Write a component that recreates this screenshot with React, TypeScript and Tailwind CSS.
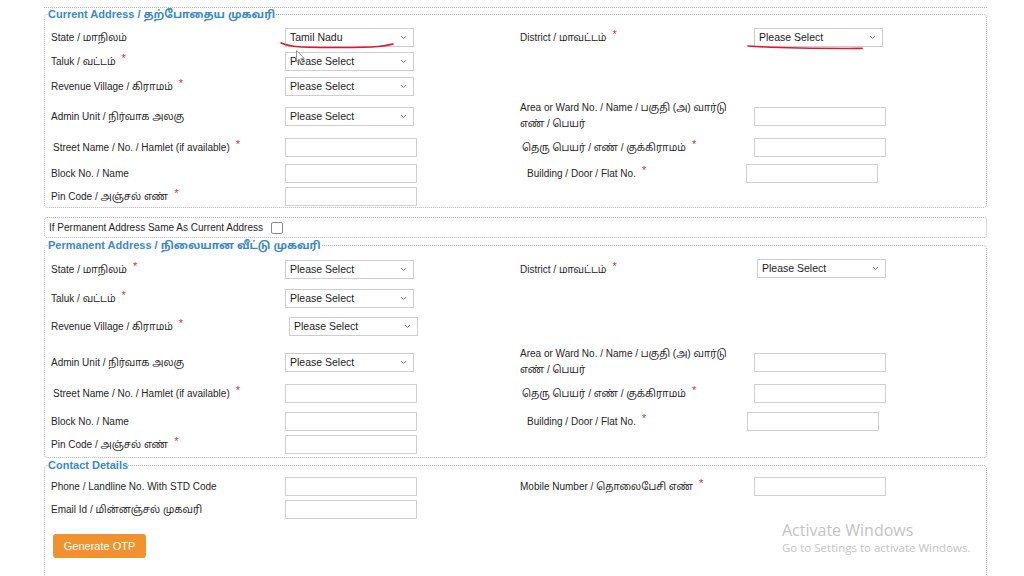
import React from "react";

type RowSpec = {
  mt: string;
  left: React.ReactNode;
  leftCtl?: React.ReactNode;
  right?: React.ReactNode;
  rightCtl?: React.ReactNode;
};

function Req() {
  return <span className="relative -top-[3px] ml-[6px] text-[11px] text-[#d2313f]">*</span>;
}

function Label({ text, req, cls = "" }: { text: React.ReactNode; req?: boolean; cls?: string }) {
  return (
    <div className={`text-[10px] leading-[16px] text-[#262626] whitespace-pre-line ${cls}`}>
      {text}
      {req && <Req />}
    </div>
  );
}

function Select({ value = "Please Select", cls = "" }: { value?: string; cls?: string }) {
  return (
    <div
      className={`flex h-[19px] w-[129px] items-center justify-between border border-[#cdcdcd] bg-white pl-[4px] pr-[6px] text-[10.5px] text-[#1c1c1c] ${cls}`}
    >
      <span>{value}</span>
      <svg width="7" height="5" viewBox="0 0 7 5">
        <path d="M1 1l2.5 2.5L6 1" stroke="#7a7a7a" fill="none" strokeWidth="1" />
      </svg>
    </div>
  );
}

function Input({ cls = "" }: { cls?: string }) {
  return <div className={`h-[19px] w-[132px] border border-[#d0d0d0] bg-white ${cls}`} />;
}

function Row({ mt, left, leftCtl, right, rightCtl }: RowSpec) {
  return (
    <div className={`grid h-[19px] grid-cols-[234px_235px_234px_1fr] grid-rows-[19px] items-center ${mt}`}>
      <div>{left}</div>
      <div>{leftCtl}</div>
      <div>{right}</div>
      <div>{rightCtl}</div>
    </div>
  );
}

function Section({ title, rows, cls = "", children }: { title: string; rows: RowSpec[]; cls?: string; children?: React.ReactNode }) {
  return (
    <fieldset className={`rounded-[4px] border border-dotted border-[#b4b4b4] pl-[6px] ${cls}`}>
      <legend className="-ml-[3px] text-[11px] font-bold leading-[13px] text-[#3c88c6]">{title}</legend>
      {rows.map((r, i) => (
        <Row key={i} {...r} />
      ))}
      {children}
    </fieldset>
  );
}

const areaLabel = "Area or Ward No. / Name / பகுதி (அ) வார்டு\nஎண் / பெயர்";

const currentRows: RowSpec[] = [
  {
    mt: "mt-[7px]",
    left: <Label text="State / மாநிலம்" />,
    leftCtl: <Select value="Tamil Nadu" />,
    right: <Label text="District / மாவட்டம்" req />,
    rightCtl: <Select />,
  },
  { mt: "mt-[5px]", left: <Label text="Taluk / வட்டம்" req />, leftCtl: <Select /> },
  { mt: "mt-[6px]", left: <Label text="Revenue Village / கிராமம்" req />, leftCtl: <Select /> },
  {
    mt: "mt-[11px]",
    left: <Label text="Admin Unit / நிர்வாக அலகு" />,
    leftCtl: <Select />,
    right: <Label text={areaLabel} cls="-mt-[2px]" />,
    rightCtl: <Input />,
  },
  {
    mt: "mt-[12px]",
    left: <Label text="Street Name / No. / Hamlet (if available)" req cls="pl-[2px] text-[9.5px]" />,
    leftCtl: <Input />,
    right: <Label text="தெரு பெயர் / எண் / குக்கிராமம்" req cls="pl-[2px]" />,
    rightCtl: <Input />,
  },
  {
    mt: "mt-[7px]",
    left: <Label text="Block No. / Name" />,
    leftCtl: <Input />,
    right: <Label text="Building / Door / Flat No." req cls="pl-[7px] text-[9.5px]" />,
    rightCtl: <Input cls="-ml-[8px]" />,
  },
  { mt: "mt-[4px]", left: <Label text="Pin Code / அஞ்சல் எண்" req />, leftCtl: <Input /> },
];

const permanentRows: RowSpec[] = [
  {
    mt: "mt-[8px]",
    left: <Label text="State / மாநிலம்" req />,
    leftCtl: <Select />,
    right: <Label text="District / மாவட்டம்" req />,
    rightCtl: <Select cls="ml-[3px] -mt-[2px]" />,
  },
  { mt: "mt-[10px]", left: <Label text="Taluk / வட்டம்" req />, leftCtl: <Select /> },
  { mt: "mt-[9px]", left: <Label text="Revenue Village / கிராமம்" req />, leftCtl: <Select cls="ml-[4px]" /> },
  {
    mt: "mt-[17px]",
    left: <Label text="Admin Unit / நிர்வாக அலகு" />,
    leftCtl: <Select />,
    right: <Label text={areaLabel} cls="-mt-[2px]" />,
    rightCtl: <Input />,
  },
  {
    mt: "mt-[12px]",
    left: <Label text="Street Name / No. / Hamlet (if available)" req cls="pl-[2px] text-[9.5px]" />,
    leftCtl: <Input />,
    right: <Label text="தெரு பெயர் / எண் / குக்கிராமம்" req cls="pl-[2px]" />,
    rightCtl: <Input />,
  },
  {
    mt: "mt-[9px]",
    left: <Label text="Block No. / Name" />,
    leftCtl: <Input />,
    right: <Label text="Building / Door / Flat No." req cls="pl-[7px] text-[9.5px]" />,
    rightCtl: <Input cls="-ml-[7px]" />,
  },
  { mt: "mt-[4px]", left: <Label text="Pin Code / அஞ்சல் எண்" req />, leftCtl: <Input /> },
];

const contactRows: RowSpec[] = [
  {
    mt: "mt-[5px]",
    left: <Label text="Phone / Landline No. With STD Code" />,
    leftCtl: <Input />,
    right: <Label text="Mobile Number / தொலைபேசி எண்" req />,
    rightCtl: <Input />,
  },
  { mt: "mt-[4px]", left: <Label text="Email Id / மின்னஞ்சல் முகவரி" />, leftCtl: <Input /> },
];

export default function App() {
  return (
    <div className="relative h-[576px] w-[1024px] overflow-hidden bg-white font-['Liberation_Sans','Noto_Sans_Tamil','Lohit_Tamil','Noto_Sans',sans-serif]">
      <div className="ml-[44px] w-[943px]">
        {/* tail of the block above */}
        <div className="h-[8px] border-b border-dotted border-[#b4b4b4]" />

        <Section title="Current Address / தற்போதைய முகவரி" rows={currentRows} cls="pb-[1px]" />

        <div className="mt-[9px] flex h-[21px] items-center rounded-[3px] border border-dotted border-[#b4b4b4] pl-[4px]">
          <span className="text-[10px] text-[#262626]">If Permanent Address Same As Current Address</span>
          <span className="ml-[8px] h-[12px] w-[12px] rounded-[2px] border border-[#8a8a8a] bg-white" />
        </div>

        <Section title="Permanent Address / நிலையான வீட்டு முகவரி" rows={permanentRows} cls="mt-[1px] pb-[3px]" />

        <Section title="Contact Details" rows={contactRows} cls="mt-[1px] pb-[40px]">
          <button className="ml-[2px] mt-[15px] h-[24px] w-[93px] rounded-[3px] bg-[#f0922d] text-[11px] text-white">
            Generate OTP
          </button>
        </Section>
      </div>

      {/* pen marks */}
      <svg className="pointer-events-none absolute left-0 top-0" width="1024" height="576">
        <path d="M281 43 C 290 47, 300 47.5, 340 47.5 S 385 46, 393 44" stroke="#d11f2c" strokeWidth="1.6" fill="none" strokeLinecap="round" />
        <path d="M748 46 C 770 47.5, 820 48.6, 862 48.4" stroke="#d11f2c" strokeWidth="1.6" fill="none" strokeLinecap="round" />
      </svg>

      {/* mouse pointer */}
      <svg className="pointer-events-none absolute left-[296px] top-[50px]" width="10" height="15" viewBox="0 0 10 15">
        <path d="M0.5 0.5 L0.5 11.5 L3.2 9 L5.2 13.6 L6.8 12.9 L4.9 8.4 L8.4 8.4 Z" fill="#ffffff" stroke="#8c8c8c" strokeWidth="0.9" />
      </svg>

      {/* system watermark */}
      <div className="pointer-events-none absolute left-[782px] top-[521px] font-['Open_Sans','Noto_Sans',sans-serif] text-[#c4c4c4]">
        <div className="text-[16px] leading-[19px]">Activate Windows</div>
        <div className="text-[11.5px] leading-[16px]">Go to Settings to activate Windows.</div>
      </div>
    </div>
  );
}
